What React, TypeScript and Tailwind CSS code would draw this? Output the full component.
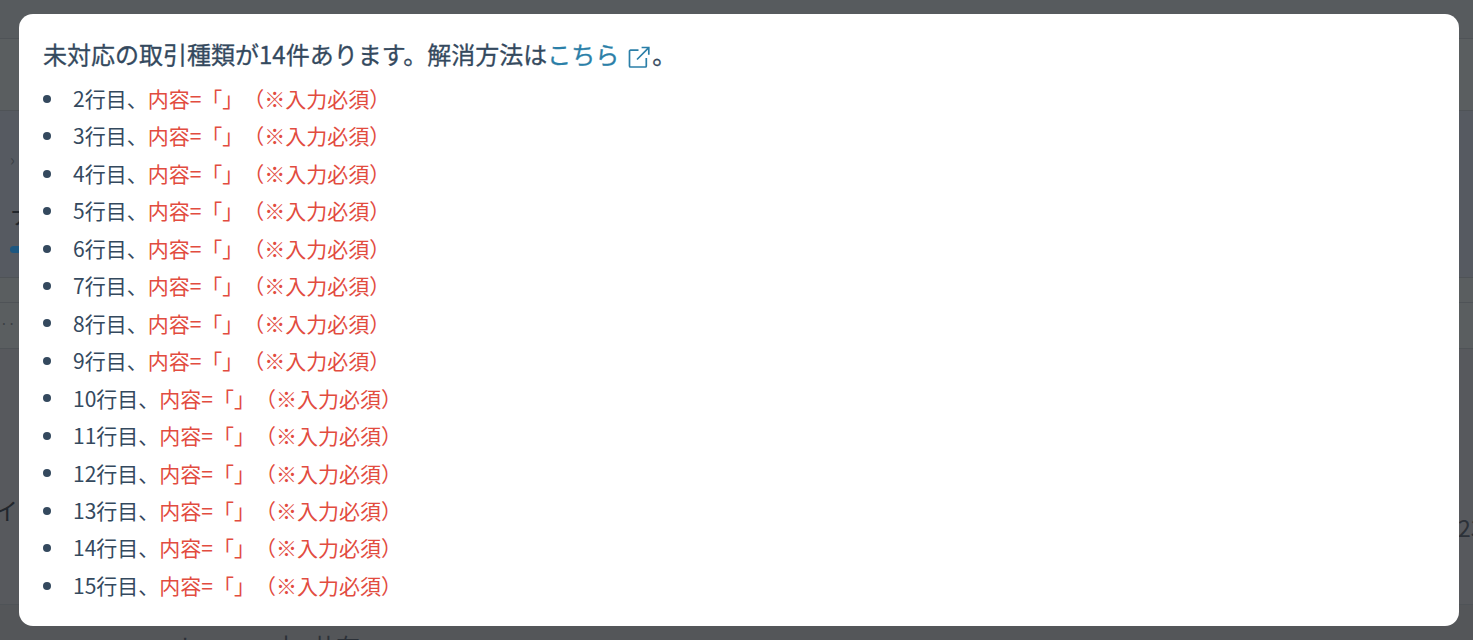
const rows = [2, 3, 4, 5, 6, 7, 8, 9, 10, 11, 12, 13, 14, 15];

function ExternalIcon() {
  return (
    <svg
      width="22"
      height="22"
      viewBox="0 0 22 22"
      fill="none"
      stroke="currentColor"
      strokeWidth="1.7"
      className="ml-[9px] mr-[2px] inline-block align-[-4px] text-[#2b7fa8]"
    >
      <path d="M10.5 4.2H2.5a1 1 0 0 0-1 1V20a1 1 0 0 0 1 1h14.8a1 1 0 0 0 1-1v-8" />
      <path d="M9 13.5 20.5 1.8M13.6 1.5h7.2v7.2" />
    </svg>
  );
}

function Backdrop() {
  return (
    <div className="h-[640px] overflow-hidden bg-[#565a5f] text-[#22272d]">
      <div className="h-[39px] border-b border-[#4f5357] bg-[#575b5e]" />
      <div className="h-[72px] border-b border-[#4f5357] bg-[#5a5e60]" />
      <div className="h-[166px] bg-[#565a61] pl-[10px] pt-[38px]">
        <div className="text-[16px] leading-[20px] text-[#3d4247]">›</div>
        <div className="mt-[30px] text-[24px] leading-[30px]">ナ</div>
        <div className="mt-[17px] h-[7px] w-[40px] rounded-full bg-[#1d5780]" />
      </div>
      <div className="h-[26px] border-y border-[#4f5357] bg-[#5a5e60]" />
      <div className="h-[46px] border-b border-[#4f5357] bg-[#5a5e60] pt-[10px] text-[14px] text-[#3a3f44]">··</div>
      <div className="relative h-[255px] bg-[#57595d] text-[24px]">
        <span className="absolute left-[-6px] top-[143px]">イ</span>
        <span className="absolute left-[1458px] top-[161px] text-[23px] text-[#2c3138]">23</span>
      </div>
      <div className="flex h-[36px] border-t border-[#4f5357] bg-[#545659] pl-[176px] pt-[26px] text-[24px] leading-[30px] text-[#2c3138]">
        <span className="w-[98px]">ト</span>
        <span className="w-[38px]">十</span>
        <span>共有</span>
      </div>
    </div>
  );
}

export default function App() {
  return (
    <div className="relative h-[640px] w-[1473px] overflow-hidden font-['Noto_Sans_CJK_JP','Noto_Sans',sans-serif] [text-spacing-trim:space-all]">
      <Backdrop />
      <div className="absolute left-[19px] top-[14px] h-[612px] w-[1440px] rounded-[14px] bg-white pl-[24px] pt-[24px] text-[#34495e]">
        <p className="-mt-[2px] text-[24px] leading-[36px] [-webkit-text-stroke:0.3px]">
          未対応の取引種類が14件あります。解消方法は
          <a className="text-[#2b7fa8]">こちら</a>
          <ExternalIcon />。
        </p>
        <ul className="mt-[8px] text-[21px] leading-[37.46px]">
          {rows.map((n) => (
            <li key={n} className="flex items-center gap-[22px]">
              <span className="h-[8px] w-[8px] rounded-full bg-[#34495e]" />
              <span>
                {n}行目、<span className="text-[#e24c3f]">内容=「」（※入力必須）</span>
              </span>
            </li>
          ))}
        </ul>
      </div>
    </div>
  );
}
